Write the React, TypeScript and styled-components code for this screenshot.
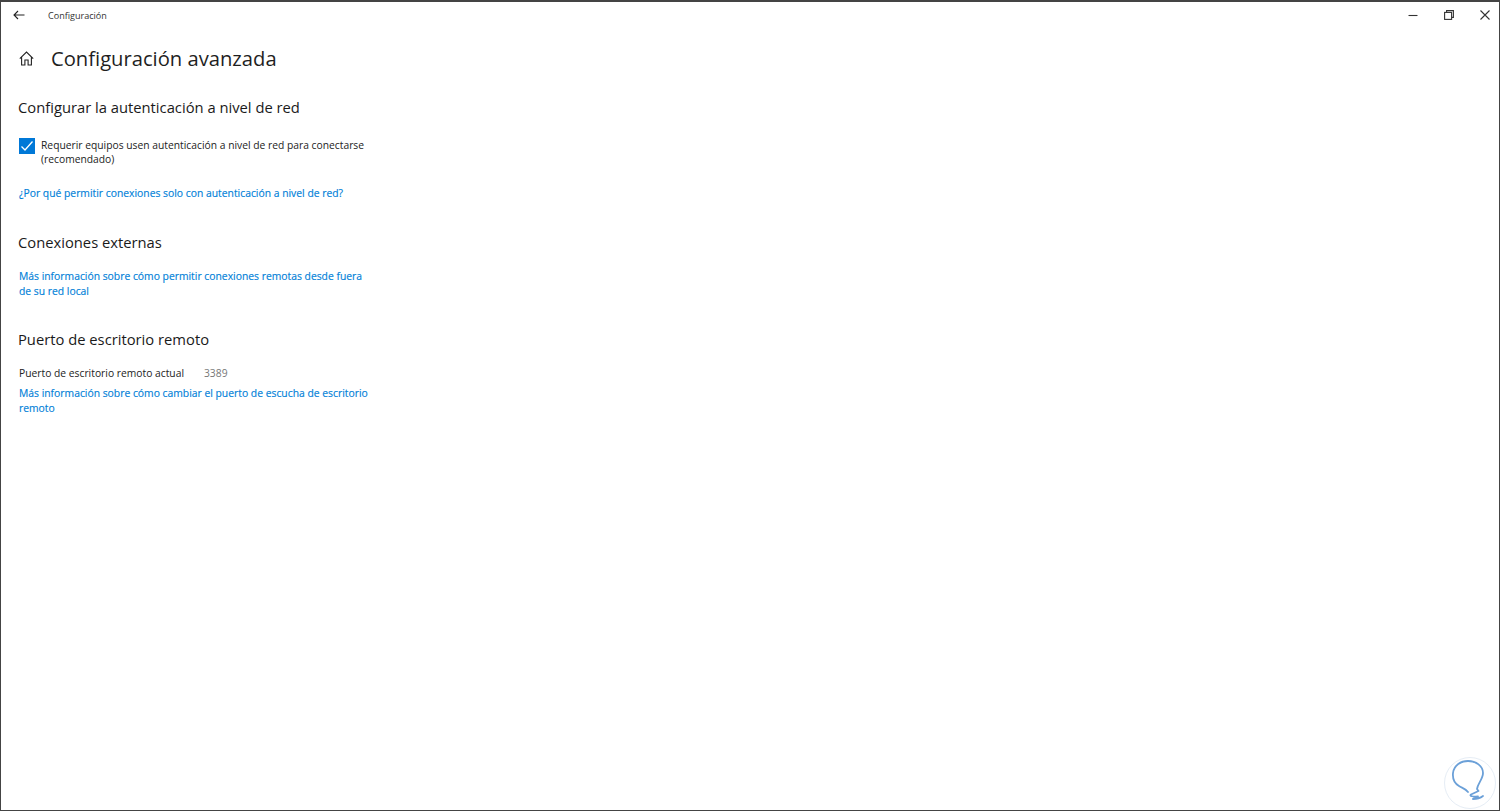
import React from "react";
import styled, { createGlobalStyle } from "styled-components";

const GlobalStyle = createGlobalStyle`
  html, body {
    margin: 0;
    height: 100%;
    background: #fff;
    font-family: "Open Sans", "Liberation Sans", sans-serif;
  }
  #root { height: 100%; }
`;

const Frame = styled.div`
  position: relative;
  box-sizing: border-box;
  width: 1500px;
  height: 811px;
  background: #fff;
  color: #1a1a1a;
  border: 1px solid #444;
  border-top-width: 2px;
  overflow: hidden;
`;

const TitleBar = styled.header`
  display: flex;
  align-items: center;
  height: 26px;
  padding-left: 12px;
  color: #222;
`;

const TitleText = styled.span`
  margin-left: 23px;
  font-size: 9.05px;
  color: #333;
`;

const WindowControls = styled.div`
  display: flex;
  align-items: center;
  gap: 26px;
  margin-left: auto;
  padding-right: 9px;
  color: #333;
`;

const ControlIcon = styled.svg`
  display: block;
  width: 10px;
  height: 10px;
  fill: none;
  stroke: currentColor;
  stroke-width: 1.1;
`;

const Content = styled.main`
  width: 356px;
  padding: 16px 0 0 18px;
`;

const PageHeading = styled.div`
  display: flex;
  align-items: center;
  gap: 17px;
  margin-bottom: 25px;
`;

const PageTitle = styled.h1`
  margin: 0;
  font-size: 20.2px;
  font-weight: 400;
  line-height: 28px;
  color: #1f1f1f;
`;

const SectionTitle = styled.h2<{ $gap: number }>`
  margin: 0 0 ${(p) => p.$gap}px -1px;
  font-size: 14.75px;
  font-weight: 400;
  line-height: 20px;
  color: #1a1a1a;
`;

const Section = styled.section<{ $after?: number }>`
  margin-bottom: ${(p) => p.$after ?? 31}px;
`;

const CheckRow = styled.div`
  display: flex;
  gap: 6px;
  margin-bottom: 20px;
`;

const CheckBox = styled.span`
  flex: none;
  display: flex;
  align-items: center;
  justify-content: center;
  width: 16px;
  height: 16px;
  background: #0078d7;
`;

const BodyText = styled.span`
  font-size: 10.3px;
  line-height: 14px;
  color: #222;
`;

const LinkText = styled.a`
  display: block;
  font-size: 10.35px;
  line-height: 15px;
  color: #0080d8;
  text-decoration: none;
  -webkit-text-stroke: 0.15px #0080d8;
`;

const PortRow = styled.div`
  display: flex;
  gap: 20px;
  margin-bottom: 6px;
  line-height: 15px;
`;

const PortValue = styled(BodyText)`
  color: #777;
`;

const Watermark = styled.svg`
  position: absolute;
  right: 2px;
  bottom: 0;
`;

export default function App() {
  return (
    <>
      <GlobalStyle />
      <Frame>
        <TitleBar>
          <svg width="12" height="10" viewBox="0 0 12 10" fill="none" stroke="currentColor" strokeWidth="1.1">
            <path d="M11.500 5H1M5 1 1 5l4 4" />
          </svg>
          <TitleText>Configuración</TitleText>
          <WindowControls>
            <ControlIcon viewBox="0 0 10 10">
              <path d="M.5 5.500h9" />
            </ControlIcon>
            <ControlIcon viewBox="0 0 10 10">
              <rect x="0.6" y="2.400" width="7" height="7" />
              <path d="M2.600 2.200V.6h6.800v6.800H7.800" />
            </ControlIcon>
            <ControlIcon viewBox="0 0 10 10">
              <path d="M.5.500l9 9M9.500.500l-9 9" />
            </ControlIcon>
          </WindowControls>
        </TitleBar>
        <Content>
          <PageHeading>
            <svg width="15" height="15" viewBox="0 0 15 15" fill="none" stroke="#222" strokeWidth="1.1">
              <path d="M.8 7.600 7.500 1l6.700 6.600M2.600 6v8h3.300V9h3.200v5h3.300V6" />
            </svg>
            <PageTitle>Configuración avanzada</PageTitle>
          </PageHeading>

          <Section>
            <SectionTitle $gap={21}>Configurar la autenticación a nivel de red</SectionTitle>
            <CheckRow>
              <CheckBox>
                <svg width="14" height="14" viewBox="0 0 14 14" fill="none" stroke="#fff" strokeWidth="1.3">
                  <path d="M1.500 7.500 5 11l7.500-8.500" />
                </svg>
              </CheckBox>
              <BodyText>Requerir equipos usen autenticación a nivel de red para conectarse (recomendado)</BodyText>
            </CheckRow>
            <LinkText>¿Por qué permitir conexiones solo con autenticación a nivel de red?</LinkText>
          </Section>

          <Section $after={30}>
            <SectionTitle $gap={17}>Conexiones externas</SectionTitle>
            <LinkText>Más información sobre cómo permitir conexiones remotas desde fuera de su red local</LinkText>
          </Section>

          <Section>
            <SectionTitle $gap={17}>Puerto de escritorio remoto</SectionTitle>
            <PortRow>
              <BodyText>Puerto de escritorio remoto actual</BodyText>
              <PortValue>3389</PortValue>
            </PortRow>
            <LinkText>Más información sobre cómo cambiar el puerto de escucha de escritorio remoto</LinkText>
          </Section>
        </Content>

        <Watermark width="54" height="54" viewBox="0 0 54 54" fill="none">
          <circle cx="27" cy="27" r="25.500" stroke="#e6edf5" strokeWidth="1" />
          <path
            d="M25 36C22 32 19 32 16 30 11 27 9.500 22 10 17 11 9 18 5 25 5c8 0 15 5 15 12 0 6-5 10-6 16l1.500 2-7.500 3.500c-2 1.500 2 2.500 7 2-2 1-4 1.500-5 2.500 4 0 8-1.500 10-3"
            stroke="#6ba0d8"
            strokeWidth="1.800"
            strokeLinecap="round"
            strokeLinejoin="round"
          />
        </Watermark>
      </Frame>
    </>
  );
}
